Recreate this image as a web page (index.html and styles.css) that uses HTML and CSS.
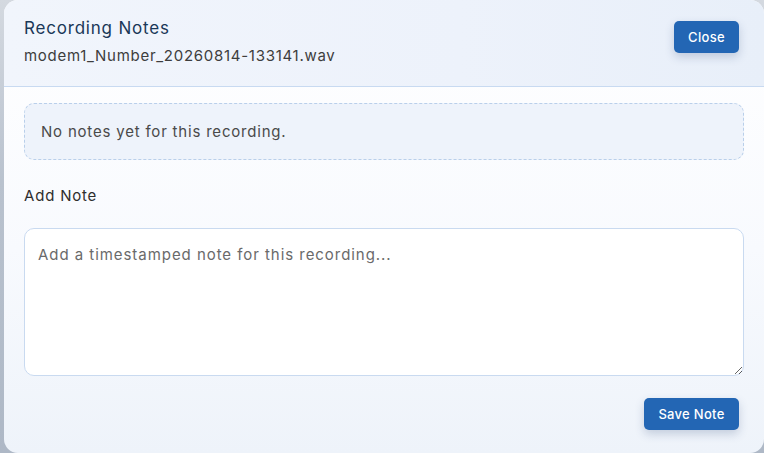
FILE: index.html
```html
<!DOCTYPE html>
<html lang="en">
<head>
<meta charset="utf-8">
<title>Recording Notes</title>
<link rel="stylesheet" href="styles.css">
</head>
<body>
<div class="backdrop">
  <div class="modal">
    <header class="modal-header">
      <div class="heading">
        <h2 class="title">Recording Notes</h2>
        <div class="filename">modem1_Number_20260814-133141.wav</div>
      </div>
      <button class="btn btn-close" type="button">Close</button>
    </header>
    <div class="modal-body">
      <div class="empty">No notes yet for this recording.</div>
      <label class="label" for="note">Add Note</label>
      <textarea id="note" class="note-input" placeholder="Add a timestamped note for this recording..."></textarea>
      <div class="actions">
        <button class="btn btn-save" type="button">Save Note</button>
      </div>
    </div>
  </div>
</div>
</body>
</html>
```

FILE: styles.css
```css
* { box-sizing: border-box; }
html, body { margin: 0; padding: 0; height: 100%; }
body {
  font-family: Inter, "Open Sans", "Liberation Sans", sans-serif;
  background: linear-gradient(180deg, #d4d9e0 0%, #b9c2ce 40%, #aeb8c6 100%);
  overflow: hidden;
}
.backdrop {
  height: 453px;
  padding-left: 4px;
  display: flex;
}
.modal {
  width: 760px;
  height: 453px;
  border-radius: 14px;
  overflow: hidden;
  background: linear-gradient(180deg, #ffffff 0%, #f8fafe 55%, #eef3fa 100%);
  display: flex;
  flex-direction: column;
}
.modal-header {
  height: 87px;
  padding: 18px 25px 0 20px;
  display: flex;
  justify-content: space-between;
  align-items: flex-start;
  background: linear-gradient(90deg, #f1f5fc 0%, #edf2fb 60%, #e8eff9 100%);
  border-bottom: 1px solid #c8daf1;
}
.title {
  margin: 0;
  font-size: 17px;
  font-weight: 400;
  color: #1a3858;
  line-height: 21px;
  letter-spacing: 0.8px;
}
.filename {
  margin-top: 7px;
  font-size: 15px;
  color: #3d3d3d;
  line-height: 20px;
  letter-spacing: 0.72px;
}
.btn {
  font-family: inherit;
  border: none;
  border-radius: 5px;
  background: #2366b4;
  color: #fff;
  font-size: 13px;
  font-weight: 500;
  letter-spacing: 0.3px;
  height: 32px;
  box-shadow: 0 4px 10px rgba(40, 70, 120, 0.22);
  cursor: pointer;
}
.btn-close {
  margin-top: 3px;
  width: 65px;
}
.btn-save { width: 95px; }
.modal-body {
  flex: 1;
  padding: 16px 20px 0 20px;
  display: flex;
  flex-direction: column;
}
.empty {
  height: 57px;
  border: 1px dashed #b9cfea;
  border-radius: 10px;
  background: #eef3fb;
  padding: 0 16px;
  display: flex;
  align-items: center;
  font-size: 15px;
  color: #4a4a4a;
  letter-spacing: 0.8px;
}
.label {
  margin-top: 26px;
  font-size: 15px;
  font-weight: 400;
  color: #2e2e2e;
  line-height: 20px;
  letter-spacing: 0.8px;
}
.note-input {
  margin-top: 22px;
  height: 148px;
  width: 100%;
  border: 1px solid #c9daf0;
  border-radius: 10px;
  background: #fff;
  padding: 16px 13px;
  font-family: inherit;
  font-size: 15px;
  color: #333;
  letter-spacing: 0.95px;
  resize: vertical;
}
.note-input::placeholder { color: #6a6a6a; }
.actions {
  margin-top: 22px;
  display: flex;
  justify-content: flex-end;
  padding-right: 5px;
}
```
